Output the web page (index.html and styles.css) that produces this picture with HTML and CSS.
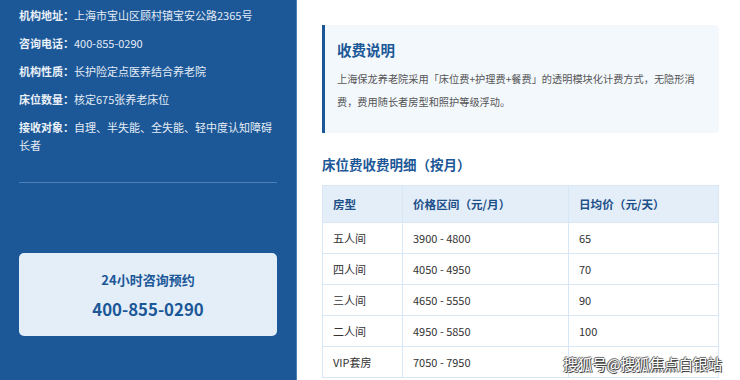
FILE: index.html
```html
<!DOCTYPE html>
<html lang="zh-CN">
<head>
<meta charset="utf-8">
<link rel="stylesheet" href="styles.css">
</head>
<body>
<div class="page">
  <aside class="side">
    <ul class="info">
      <li><b>机构地址：</b>上海市宝山区顾村镇宝安公路2365号</li>
      <li><b>咨询电话：</b>400-855-0290</li>
      <li><b>机构性质：</b>长护险定点医养结合养老院</li>
      <li><b>床位数量：</b>核定675张养老床位</li>
      <li><b>接收对象：</b>自理、半失能、全失能、轻中度认知障碍长者</li>
    </ul>
    <hr class="divider">
    <div class="hotline">
      <div class="hotline-title">24小时咨询预约</div>
      <div class="hotline-phone">400-855-0290</div>
    </div>
  </aside>
  <main class="content">
    <section class="note">
      <h3 class="note-title">收费说明</h3>
      <p class="note-text">上海保龙养老院采用「床位费+护理费+餐费」的透明模块化计费方式，无隐形消费，费用随长者房型和照护等级浮动。</p>
    </section>
    <h3 class="table-title">床位费收费明细（按月）</h3>
    <table class="fee">
      <thead>
        <tr><th class="c1">房型</th><th class="c2">价格区间（元/月）</th><th class="c3">日均价（元/天）</th></tr>
      </thead>
      <tbody>
        <tr><td>五人间</td><td>3900 - 4800</td><td>65</td></tr>
        <tr><td>四人间</td><td>4050 - 4950</td><td>70</td></tr>
        <tr><td>三人间</td><td>4650 - 5550</td><td>90</td></tr>
        <tr><td>二人间</td><td>4950 - 5850</td><td>100</td></tr>
        <tr><td>VIP套房</td><td>7050 - 7950</td><td></td></tr>
      </tbody>
    </table>
  </main>
  <div class="watermark">搜狐号@搜狐焦点白银站</div>
</div>
</body>
</html>
```

FILE: styles.css
```css
* { box-sizing: border-box; }
html, body { margin: 0; padding: 0; }
body {
  font-family: "Noto Sans CJK SC", "Noto Sans", sans-serif;
  background: #fff;
  width: 740px;
  height: 380px;
  overflow: hidden;
}
.page {
  position: relative;
  display: flex;
  height: 380px;
}
.side {
  width: 297px;
  flex: 0 0 297px;
  background: #1c5897;
  border-right: 1px solid #4b7fb6;
  padding: 6px 19px 0 19px;
  color: #e6eef7;
}
.info {
  list-style: none;
  margin: 0;
  padding: 0;
  display: flex;
  flex-direction: column;
  gap: 10px;
}
.info li {
  font-size: 11px;
  line-height: 18px;
  color: #e4ecf6;
}
.info b {
  font-weight: 700;
  color: #e9f0f8;
}
.divider {
  border: 0;
  border-top: 1px solid #4d80b8;
  margin: 28px 0 0 0;
  height: 0;
}
.hotline {
  margin-top: 70px;
  height: 83px;
  background: #e3eef9;
  border-radius: 5px;
  display: flex;
  flex-direction: column;
  align-items: center;
  padding-top: 18px;
  color: #1c5897;
}
.hotline-title {
  font-size: 13px;
  font-weight: 700;
  line-height: 18px;
}
.hotline-phone {
  font-size: 16.8px;
  font-weight: 700;
  line-height: 22px;
  margin-top: 9px;
}
.content {
  flex: 1;
  padding: 25px 22px 0 25px;
}
.note {
  background: #f3f8fd;
  border-left: 3px solid #1c5897;
  border-radius: 0 4px 4px 0;
  padding: 16px 16px 0 12px;
  height: 108px;
}
.note-title {
  margin: 0;
  font-size: 14.5px;
  line-height: 18px;
  font-weight: 700;
  color: #1c5897;
}
.note-text {
  margin: 8px 0 0 0;
  font-size: 10.2px;
  line-height: 23px;
  color: #555;
}
.table-title {
  margin: 22px 0 0 0;
  font-size: 13.5px;
  line-height: 18px;
  font-weight: 700;
  color: #1c5897;
}
.fee {
  margin-top: 12px;
  width: 396px;
  border-collapse: collapse;
  table-layout: fixed;
  font-size: 11px;
}
.fee th, .fee td {
  border: 1px solid #d8e7f6;
  text-align: left;
  padding: 0 10px;
}
.fee th {
  background: #e3eef9;
  color: #1d4f88;
  font-weight: 700;
  font-size: 11.6px;
  height: 37px;
}
.fee td {
  height: 31px;
  color: #333;
}
.fee .c1 { width: 80px; }
.fee .c2 { width: 166px; }
.fee .c3 { width: 150px; }
.watermark {
  position: absolute;
  right: 18px;
  bottom: 7px;
  font-size: 14.5px;
  line-height: 18px;
  color: #fff;
  text-shadow: 1px 1px 0 #444, -1px 0 0 #666, 0 -1px 0 #777, 0 0 2px #333;
}
```
